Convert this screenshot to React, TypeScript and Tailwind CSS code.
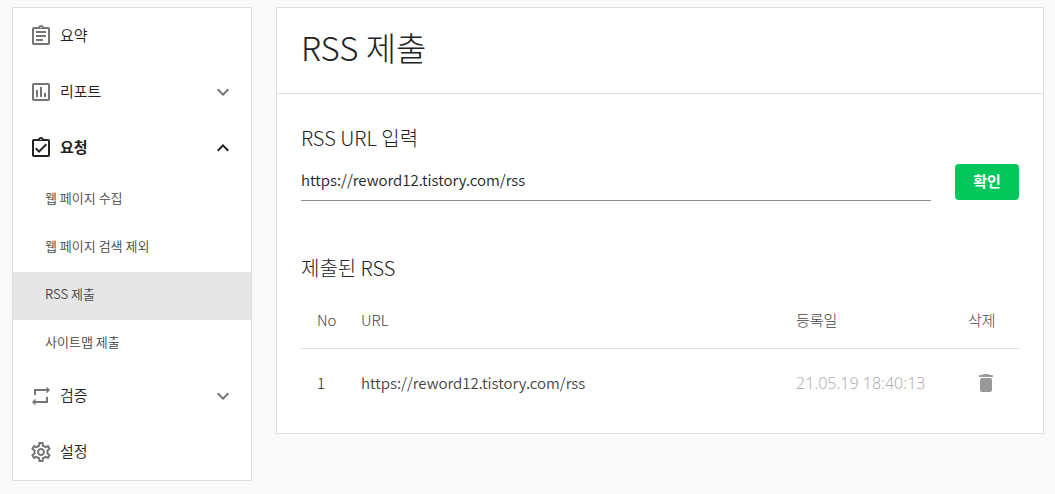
import React, { useState } from 'react';
import type { ReactNode } from 'react';
import {
  MdExpandLess,
  MdExpandMore,
  MdOutlineAssessment,
  MdOutlineAssignment,
  MdOutlineAssignmentTurnedIn,
  MdOutlineSettings
} from 'react-icons/md';

const subItems = ['웹 페이지 수집', '웹 페이지 검색 제외', 'RSS 제출', '사이트맵 제출'];

const feeds = [
  { no: 1, url: 'https://reword12.tistory.com/rss', date: '21.05.19 18:40:13' }
];

function RepeatIcon({ className }: { className?: string }) {
  return (
    <svg viewBox="0 0 24 24" fill="currentColor" className={className} aria-hidden="true">
      <path d="M5 5h12.5V2.500L21 6l-3.500 3.500V7H7v4H5z" />
      <path d="M19 19H6.500v2.500L3 18l3.500-3.500V17H17v-4h2z" />
    </svg>
  );
}

function TrashIcon({ className }: { className?: string }) {
  return (
    <svg viewBox="0 0 24 24" fill="currentColor" className={className} aria-hidden="true">
      <path d="M8 7h8a2 2 0 0 1 2 2v10a2 2 0 0 1-2 2H8a2 2 0 0 1-2-2V9a2 2 0 0 1 2-2z" />
      <path d="M5 6V4.800Q5 4 6 4h2.500l1-1h5l1 1H18q1 0 1 .8V6z" />
    </svg>
  );
}

type NavItemProps = {
  icon: ReactNode;
  label: string;
  active?: boolean;
  expandable?: boolean;
};

function NavItem({ icon, label, active, expandable }: NavItemProps) {
  return (
    <button
      type="button"
      aria-expanded={expandable ? !!active : undefined}
      className={`flex h-14 w-full items-center px-4 text-left text-[15px] text-[#222] ${
        active ? 'font-bold' : 'font-[350]'
      }`}>
      <span className={active ? 'text-[#222]' : 'text-[#757575]'}>{icon}</span>
      <span className="ml-[7px] flex-1 pb-[2px]">{label}</span>
      {expandable && (
        active ?
        <MdExpandLess className="h-6 w-6" /> :
        <MdExpandMore className="h-6 w-6 text-[#757575]" />
      )}
    </button>
  );
}

function Sidebar() {
  return (
    <nav className="w-60 shrink-0 border border-[#e0e0e0] bg-white">
      <NavItem icon={<MdOutlineAssignment className="h-6 w-6" />} label="요약" />
      <NavItem icon={<MdOutlineAssessment className="h-6 w-6" />} label="리포트" expandable />
      <NavItem icon={<MdOutlineAssignmentTurnedIn className="h-6 w-6" />} label="요청" active expandable />
      <ul>
        {subItems.map((item) => (
          <li key={item}>
            <a
              href="#"
              className={`flex h-12 items-center px-8 pb-1 text-[13px] font-[350] text-[#444] ${
                item === 'RSS 제출' ? 'bg-[#e6e6e6]' : ''
              }`}>
              {item}
            </a>
          </li>
        ))}
      </ul>
      <NavItem icon={<RepeatIcon className="h-6 w-6" />} label="검증" expandable />
      <NavItem icon={<MdOutlineSettings className="h-6 w-6" />} label="설정" />
    </nav>
  );
}

export default function App() {
  const [url, setUrl] = useState('https://reword12.tistory.com/rss');

  return (
    <div className="flex min-h-screen items-start gap-6 bg-[#fafafa] pt-[7px] pr-[11px] pl-3 font-['Noto_Sans_CJK_KR',sans-serif] text-[#222]">
      <Sidebar />

      <main className="min-w-0 flex-1 border border-[#e0e0e0] bg-white">
        <header className="flex h-[86px] items-center border-b border-[#e0e0e0] px-6 pb-2">
          <h1 className="text-[33px] leading-10 font-light">RSS 제출</h1>
        </header>

        <div className="px-6 pt-7 pb-4">
          <label htmlFor="rss-url" className="block text-xl leading-8 font-light">
            RSS URL 입력
          </label>
          <form className="mt-2 flex gap-6" onSubmit={(e) => e.preventDefault()}>
            <input
              id="rss-url"
              type="text"
              value={url}
              onChange={(e) => setUrl(e.target.value)}
              className="h-[39px] min-w-0 flex-1 border-b border-[#8c8c8c] pb-1 text-[15px] font-[350] outline-none"
            />
            <button
              type="submit"
              className="mt-[2px] h-9 w-16 rounded bg-[#03c75a] pb-[2px] text-[15px] font-bold text-white">
              확인
            </button>
          </form>

          <h2 className="mt-[51px] text-xl leading-8 font-light">제출된 RSS</h2>
          <table className="mt-2 w-full table-fixed text-left text-[15px] font-light">
            <thead>
              <tr className="h-14 border-b border-[#e0e0e0] text-[#444]">
                <th className="w-11 pl-4 font-light">No</th>
                <th className="pl-4 font-light">URL</th>
                <th className="w-[172px] pl-4 font-light">등록일</th>
                <th className="w-[67px] pl-4 font-light">삭제</th>
              </tr>
            </thead>
            <tbody>
              {feeds.map((feed) => (
                <tr key={feed.no} className="h-[69px]">
                  <td className="pl-4">{feed.no}</td>
                  <td className="pl-4 font-[350] text-[#444]">{feed.url}</td>
                  <td className="pl-4 font-['Noto_Sans',sans-serif] text-base whitespace-nowrap text-[#b0b0b0]">
                    {feed.date}
                  </td>
                  <td>
                    <button type="button" aria-label="삭제" className="mx-auto block text-[#999]">
                      <TrashIcon className="h-6 w-6" />
                    </button>
                  </td>
                </tr>
              ))}
            </tbody>
          </table>
        </div>
      </main>
    </div>
  );
}
